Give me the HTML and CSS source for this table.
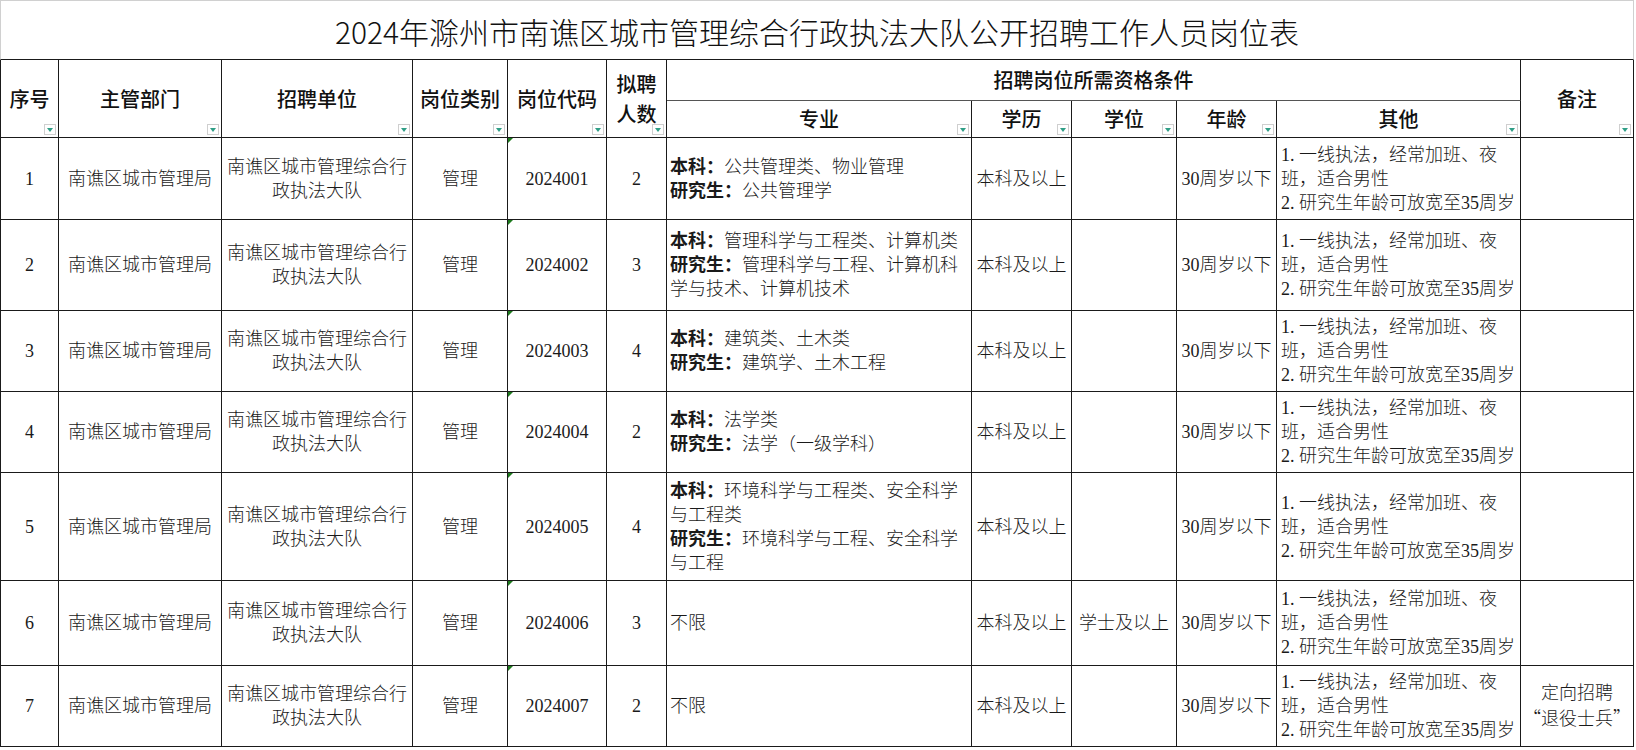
FILE: index.html
```html
<!DOCTYPE html>
<html lang="zh-CN">
<head>
<meta charset="utf-8">
<title>岗位表</title>
<link rel="stylesheet" href="styles.css">
</head>
<body>
<div class="sheet">
  <div class="title">2024年滁州市南谯区城市管理综合行政执法大队公开招聘工作人员岗位表</div>

  <div class="hd r2 first">序号<i class="flt"></i></div>
  <div class="hd r2">主管部门<i class="flt"></i></div>
  <div class="hd r2">招聘单位<i class="flt"></i></div>
  <div class="hd r2">岗位类别<i class="flt"></i></div>
  <div class="hd r2">岗位代码<i class="flt"></i></div>
  <div class="hd r2 two">拟聘<br>人数<i class="flt"></i></div>
  <div class="hd c5 group">招聘岗位所需资格条件</div>
  <div class="hd r2">备注<i class="flt"></i></div>
  <div class="hd">专业<i class="flt"></i></div>
  <div class="hd">学历<i class="flt"></i></div>
  <div class="hd">学位<i class="flt"></i></div>
  <div class="hd">年龄<i class="flt"></i></div>
  <div class="hd">其他<i class="flt"></i></div>

  <!-- row 1 -->
  <div class="td first">1</div>
  <div class="td">南谯区城市管理局</div>
  <div class="td">南谯区城市管理综合行<br>政执法大队</div>
  <div class="td">管理</div>
  <div class="td code">2024001</div>
  <div class="td">2</div>
  <div class="td left"><div><b>本科：</b>公共管理类、物业管理<br><b>研究生：</b>公共管理学</div></div>
  <div class="td">本科及以上</div>
  <div class="td"></div>
  <div class="td">30周岁以下</div>
  <div class="td left other"><div>1. 一线执法，经常加班、夜<br>班，适合男性<br>2. 研究生年龄可放宽至35周岁</div></div>
  <div class="td"></div>

  <!-- row 2 -->
  <div class="td first">2</div>
  <div class="td">南谯区城市管理局</div>
  <div class="td">南谯区城市管理综合行<br>政执法大队</div>
  <div class="td">管理</div>
  <div class="td code">2024002</div>
  <div class="td">3</div>
  <div class="td left"><div><b>本科：</b>管理科学与工程类、计算机类<br><b>研究生：</b>管理科学与工程、计算机科<br>学与技术、计算机技术</div></div>
  <div class="td">本科及以上</div>
  <div class="td"></div>
  <div class="td">30周岁以下</div>
  <div class="td left other"><div>1. 一线执法，经常加班、夜<br>班，适合男性<br>2. 研究生年龄可放宽至35周岁</div></div>
  <div class="td"></div>

  <!-- row 3 -->
  <div class="td first">3</div>
  <div class="td">南谯区城市管理局</div>
  <div class="td">南谯区城市管理综合行<br>政执法大队</div>
  <div class="td">管理</div>
  <div class="td code">2024003</div>
  <div class="td">4</div>
  <div class="td left"><div><b>本科：</b>建筑类、土木类<br><b>研究生：</b>建筑学、土木工程</div></div>
  <div class="td">本科及以上</div>
  <div class="td"></div>
  <div class="td">30周岁以下</div>
  <div class="td left other"><div>1. 一线执法，经常加班、夜<br>班，适合男性<br>2. 研究生年龄可放宽至35周岁</div></div>
  <div class="td"></div>

  <!-- row 4 -->
  <div class="td first">4</div>
  <div class="td">南谯区城市管理局</div>
  <div class="td">南谯区城市管理综合行<br>政执法大队</div>
  <div class="td">管理</div>
  <div class="td code">2024004</div>
  <div class="td">2</div>
  <div class="td left"><div><b>本科：</b>法学类<br><b>研究生：</b>法学（一级学科）</div></div>
  <div class="td">本科及以上</div>
  <div class="td"></div>
  <div class="td">30周岁以下</div>
  <div class="td left other"><div>1. 一线执法，经常加班、夜<br>班，适合男性<br>2. 研究生年龄可放宽至35周岁</div></div>
  <div class="td"></div>

  <!-- row 5 -->
  <div class="td first">5</div>
  <div class="td">南谯区城市管理局</div>
  <div class="td">南谯区城市管理综合行<br>政执法大队</div>
  <div class="td">管理</div>
  <div class="td code">2024005</div>
  <div class="td">4</div>
  <div class="td left"><div><b>本科：</b>环境科学与工程类、安全科学<br>与工程类<br><b>研究生：</b>环境科学与工程、安全科学<br>与工程</div></div>
  <div class="td">本科及以上</div>
  <div class="td"></div>
  <div class="td">30周岁以下</div>
  <div class="td left other"><div>1. 一线执法，经常加班、夜<br>班，适合男性<br>2. 研究生年龄可放宽至35周岁</div></div>
  <div class="td"></div>

  <!-- row 6 -->
  <div class="td first">6</div>
  <div class="td">南谯区城市管理局</div>
  <div class="td">南谯区城市管理综合行<br>政执法大队</div>
  <div class="td">管理</div>
  <div class="td code">2024006</div>
  <div class="td">3</div>
  <div class="td left"><div>不限</div></div>
  <div class="td">本科及以上</div>
  <div class="td">学士及以上</div>
  <div class="td">30周岁以下</div>
  <div class="td left other"><div>1. 一线执法，经常加班、夜<br>班，适合男性<br>2. 研究生年龄可放宽至35周岁</div></div>
  <div class="td"></div>

  <!-- row 7 -->
  <div class="td first">7</div>
  <div class="td">南谯区城市管理局</div>
  <div class="td">南谯区城市管理综合行<br>政执法大队</div>
  <div class="td">管理</div>
  <div class="td code">2024007</div>
  <div class="td">2</div>
  <div class="td left"><div>不限</div></div>
  <div class="td">本科及以上</div>
  <div class="td"></div>
  <div class="td">30周岁以下</div>
  <div class="td left other"><div>1. 一线执法，经常加班、夜<br>班，适合男性<br>2. 研究生年龄可放宽至35周岁</div></div>
  <div class="td"><div>定向招聘<br><span class="cjk">“退役士兵”</span></div></div>
</div>
</body>
</html>
```

FILE: styles.css
```css
* { box-sizing: border-box; }
html, body {
  margin: 0;
  padding: 0;
  background: #ffffff;
}
body {
  width: 1636px;
  height: 750px;
  overflow: hidden;
}
.sheet {
  display: grid;
  width: 1634px;
  grid-template-columns: 59px 163px 191px 95px 99px 60px 305px 100px 105px 100px 244px 113px;
  grid-template-rows: 60px 41px 37px 82px 91px 81px 81px 108px 85px 81px;
  font-family: "Liberation Serif", "Noto Sans CJK SC", serif;
  color: #1a1a1a;
}
.title {
  grid-column: 1 / -1;
  display: flex;
  align-items: center;
  justify-content: center;
  border-top: 1px solid #d0d0d0;
  border-left: 1px solid #d0d0d0;
  border-right: 1px solid #d0d0d0;
  border-bottom: 1px solid #1a1a1a;
  font-family: "Noto Sans CJK SC", sans-serif;
  font-weight: 300;
  font-size: 30px;
  color: #111;
  padding-top: 2px;
}
.hd, .td {
  position: relative;
  display: flex;
  align-items: center;
  justify-content: center;
  text-align: center;
  border-right: 1px solid #1a1a1a;
  border-bottom: 1px solid #1a1a1a;
  white-space: nowrap;
  overflow: hidden;
}
.first { border-left: 1px solid #1a1a1a; }
.hd {
  font-family: "Noto Sans CJK SC", sans-serif;
  font-size: 20px;
  line-height: 28px;
  font-weight: 500;
  color: #111;
}
.r2 { grid-row: span 2; }
.c5 { grid-column: span 5; border-bottom-color: #555; }
.two { line-height: 30px; }
.td {
  font-size: 18px;
  line-height: 24px;
  font-weight: 300;
}
.td b { font-weight: 700; }
.left {
  justify-content: flex-start;
  text-align: left;
  padding-left: 3px;
}
.other { padding-left: 4px; }
.cjk {
  font-family: "Noto Sans CJK SC", sans-serif;
  font-feature-settings: "fwid" 1;
}
.flt {
  position: absolute;
  right: 2px;
  bottom: 2px;
  width: 12px;
  height: 11px;
  border: 1px solid #cfcfcf;
  background: #fff;
}
.flt::after {
  content: "";
  position: absolute;
  left: 2px;
  top: 3px;
  border-left: 3px solid transparent;
  border-right: 3px solid transparent;
  border-top: 4px solid #2f9e86;
}
.code::before {
  content: "";
  position: absolute;
  left: 0;
  top: 0;
  border-top: 5px solid #1d7a1d;
  border-right: 5px solid transparent;
}
```
